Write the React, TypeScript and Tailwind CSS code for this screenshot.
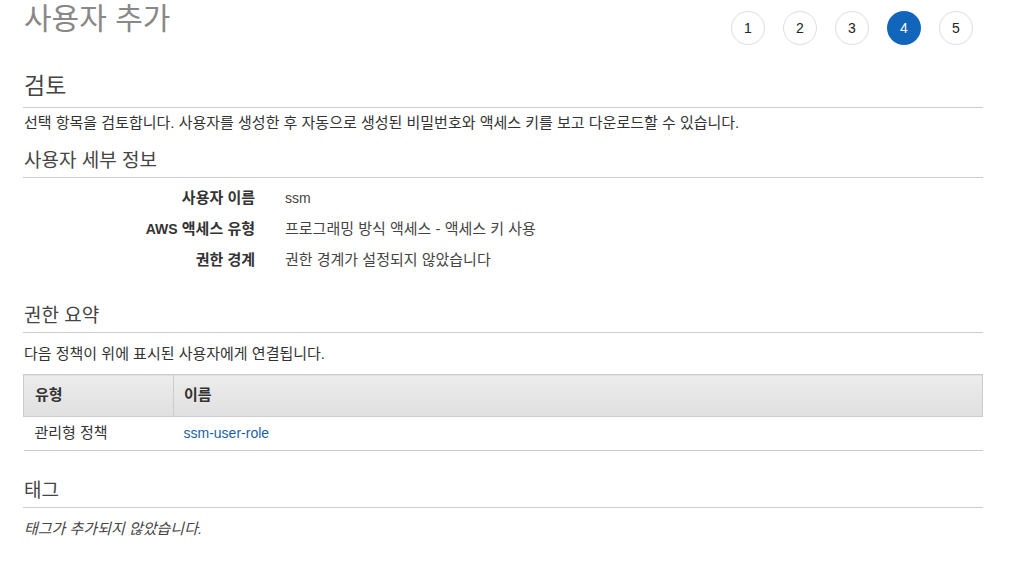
import React from 'react'

const STEPS = [1, 2, 3, 4, 5]
const ACTIVE_STEP = 4

const DETAILS: { label: React.ReactNode; value: React.ReactNode; key: string }[] = [
  { key: 'name', label: '사용자 이름', value: <span className="text-[14px]">ssm</span> },
  {
    key: 'type',
    label: (
      <>
        <span className="text-[14px]">AWS</span> 액세스 유형
      </>
    ),
    value: '프로그래밍 방식 액세스 - 액세스 키 사용',
  },
  { key: 'boundary', label: '권한 경계', value: '권한 경계가 설정되지 않았습니다' },
]

function SectionTitle({ children, className = '' }: { children: React.ReactNode; className?: string }) {
  return (
    <h2 className={`text-[19px] leading-[26px] text-[#444] border-b border-[#ccc] pb-[3px] pl-px ${className}`}>
      {children}
    </h2>
  )
}

export default function App() {
  return (
    <div
      className="w-[1012px] h-[561px] bg-white overflow-hidden text-[15px] text-[#333]"
      style={{ fontFamily: '"Liberation Sans", Arial, "Noto Sans CJK KR", sans-serif' }}
    >
      <div className="ml-[23px] w-[960px]">
        {/* Header */}
        <div className="flex items-start justify-between">
          <h1 className="text-[30px] leading-[36px] text-[#888] mt-[1px] pl-px">사용자 추가</h1>
          <div className="flex gap-[18px] mt-[11px] mr-[10px]">
            {STEPS.map((s) => (
              <div
                key={s}
                className={`w-[34px] h-[34px] rounded-full flex items-center justify-center text-[14px] ${
                  s === ACTIVE_STEP
                    ? 'bg-[#1166bb] text-white'
                    : 'border border-[#ddd] text-[#222] bg-white'
                }`}
              >
                {s}
              </div>
            ))}
          </div>
        </div>

        {/* Review */}
        <h2 className="mt-[27px] text-[23px] leading-[28px] text-[#444] border-b border-[#ccc] pb-[7px] pl-px">검토</h2>
        <p className="mt-[6px] leading-[18px] pl-px">
          선택 항목을 검토합니다. 사용자를 생성한 후 자동으로 생성된 비밀번호와 액세스 키를 보고 다운로드할 수 있습니다.
        </p>

        {/* User details */}
        <SectionTitle className="mt-[16px]">사용자 세부 정보</SectionTitle>
        <div className="mt-[11px] flex flex-col gap-[13px]">
          {DETAILS.map((d) => (
            <div key={d.key} className="flex leading-[18px]">
              <div className="w-[232px] text-right font-bold text-[#333]">{d.label}</div>
              <div className="ml-[30px] text-[#444]">{d.value}</div>
            </div>
          ))}
        </div>

        {/* Permissions summary */}
        <SectionTitle className="mt-[34px]">권한 요약</SectionTitle>
        <p className="mt-[12px] leading-[18px] pl-px">다음 정책이 위에 표시된 사용자에게 연결됩니다.</p>
        <table className="mt-[11px] w-full border-collapse">
          <thead>
            <tr className="bg-gradient-to-b from-[#ececec] to-[#e0e0e0] border border-[#ccc]">
              <th className="w-[150px] h-[42px] text-left font-bold px-[11px] border-r border-[#ccc]">유형</th>
              <th className="h-[42px] text-left font-bold px-[10px]">이름</th>
            </tr>
          </thead>
          <tbody>
            <tr className="border-b border-[#ccc]">
              <td className="h-[34px] px-[11px] text-[#333]">관리형 정책</td>
              <td className="h-[34px] px-[10px] text-[14px] text-[#1a5fa6]">ssm-user-role</td>
            </tr>
          </tbody>
        </table>

        {/* Tags */}
        <SectionTitle className="mt-[27px]">태그</SectionTitle>
        <p className="mt-[12px] leading-[18px] italic text-[#444] pl-px">태그가 추가되지 않았습니다.</p>
      </div>
    </div>
  )
}
